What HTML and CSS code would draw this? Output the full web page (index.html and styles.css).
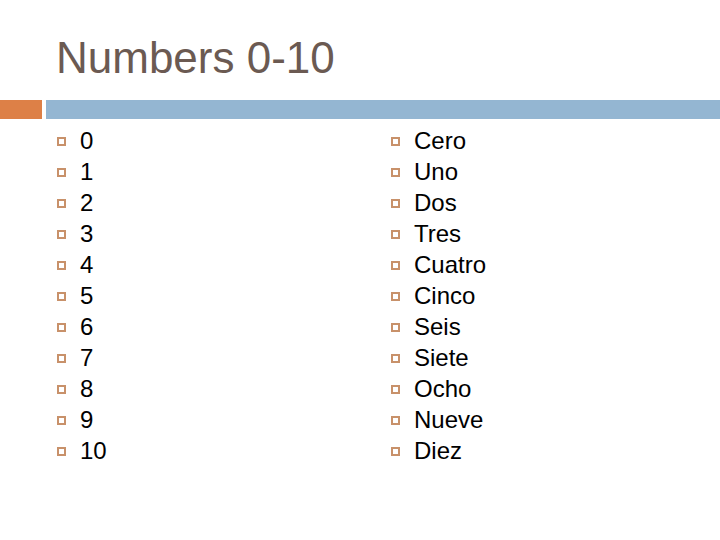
FILE: index.html
```html
<!DOCTYPE html>
<html>
<head>
<meta charset="utf-8">
<link rel="stylesheet" href="styles.css">
</head>
<body>
<div class="slide">
  <header class="head">
    <h1 class="title">Numbers 0-10</h1>
  </header>
  <div class="bars">
    <div class="bar-accent"></div>
    <div class="bar-main"></div>
  </div>
  <div class="cols">
    <ul class="list">
      <li class="item"><span class="box"></span><span>0</span></li>
      <li class="item"><span class="box"></span><span>1</span></li>
      <li class="item"><span class="box"></span><span>2</span></li>
      <li class="item"><span class="box"></span><span>3</span></li>
      <li class="item"><span class="box"></span><span>4</span></li>
      <li class="item"><span class="box"></span><span>5</span></li>
      <li class="item"><span class="box"></span><span>6</span></li>
      <li class="item"><span class="box"></span><span>7</span></li>
      <li class="item"><span class="box"></span><span>8</span></li>
      <li class="item"><span class="box"></span><span>9</span></li>
      <li class="item"><span class="box"></span><span>10</span></li>
    </ul>
    <ul class="list">
      <li class="item"><span class="box"></span><span>Cero</span></li>
      <li class="item"><span class="box"></span><span>Uno</span></li>
      <li class="item"><span class="box"></span><span>Dos</span></li>
      <li class="item"><span class="box"></span><span>Tres</span></li>
      <li class="item"><span class="box"></span><span>Cuatro</span></li>
      <li class="item"><span class="box"></span><span>Cinco</span></li>
      <li class="item"><span class="box"></span><span>Seis</span></li>
      <li class="item"><span class="box"></span><span>Siete</span></li>
      <li class="item"><span class="box"></span><span>Ocho</span></li>
      <li class="item"><span class="box"></span><span>Nueve</span></li>
      <li class="item"><span class="box"></span><span>Diez</span></li>
    </ul>
  </div>
</div>
</body>
</html>
```
FILE: styles.css
```css
html, body {
  margin: 0;
  padding: 0;
  background: #ffffff;
}
.slide {
  width: 720px;
  height: 540px;
  font-family: "Liberation Sans", Arial, sans-serif;
  overflow: hidden;
}
.head {
  padding: 36px 0 0 56px;
}
.title {
  margin: 0;
  font-size: 44px;
  line-height: 44px;
  font-weight: normal;
  color: #6b5a52;
}
.bars {
  display: flex;
  gap: 4px;
  margin-top: 20px;
  height: 19px;
}
.bar-accent {
  width: 42px;
  background: #dd8047;
}
.bar-main {
  flex: 1;
  background: #94b6d2;
}
.cols {
  display: grid;
  grid-template-columns: 334px 1fr;
  padding: 6px 0 0 57px;
}
.list {
  list-style: none;
  margin: 0;
  padding: 0;
}
.item {
  display: flex;
  align-items: center;
  gap: 14px;
  height: 31px;
  font-size: 24px;
  line-height: 31px;
  color: #000000;
}
.box {
  box-sizing: border-box;
  width: 9px;
  height: 9px;
  border: 2px solid #c8916a;
  margin-top: 2px;
  flex: none;
}
```
